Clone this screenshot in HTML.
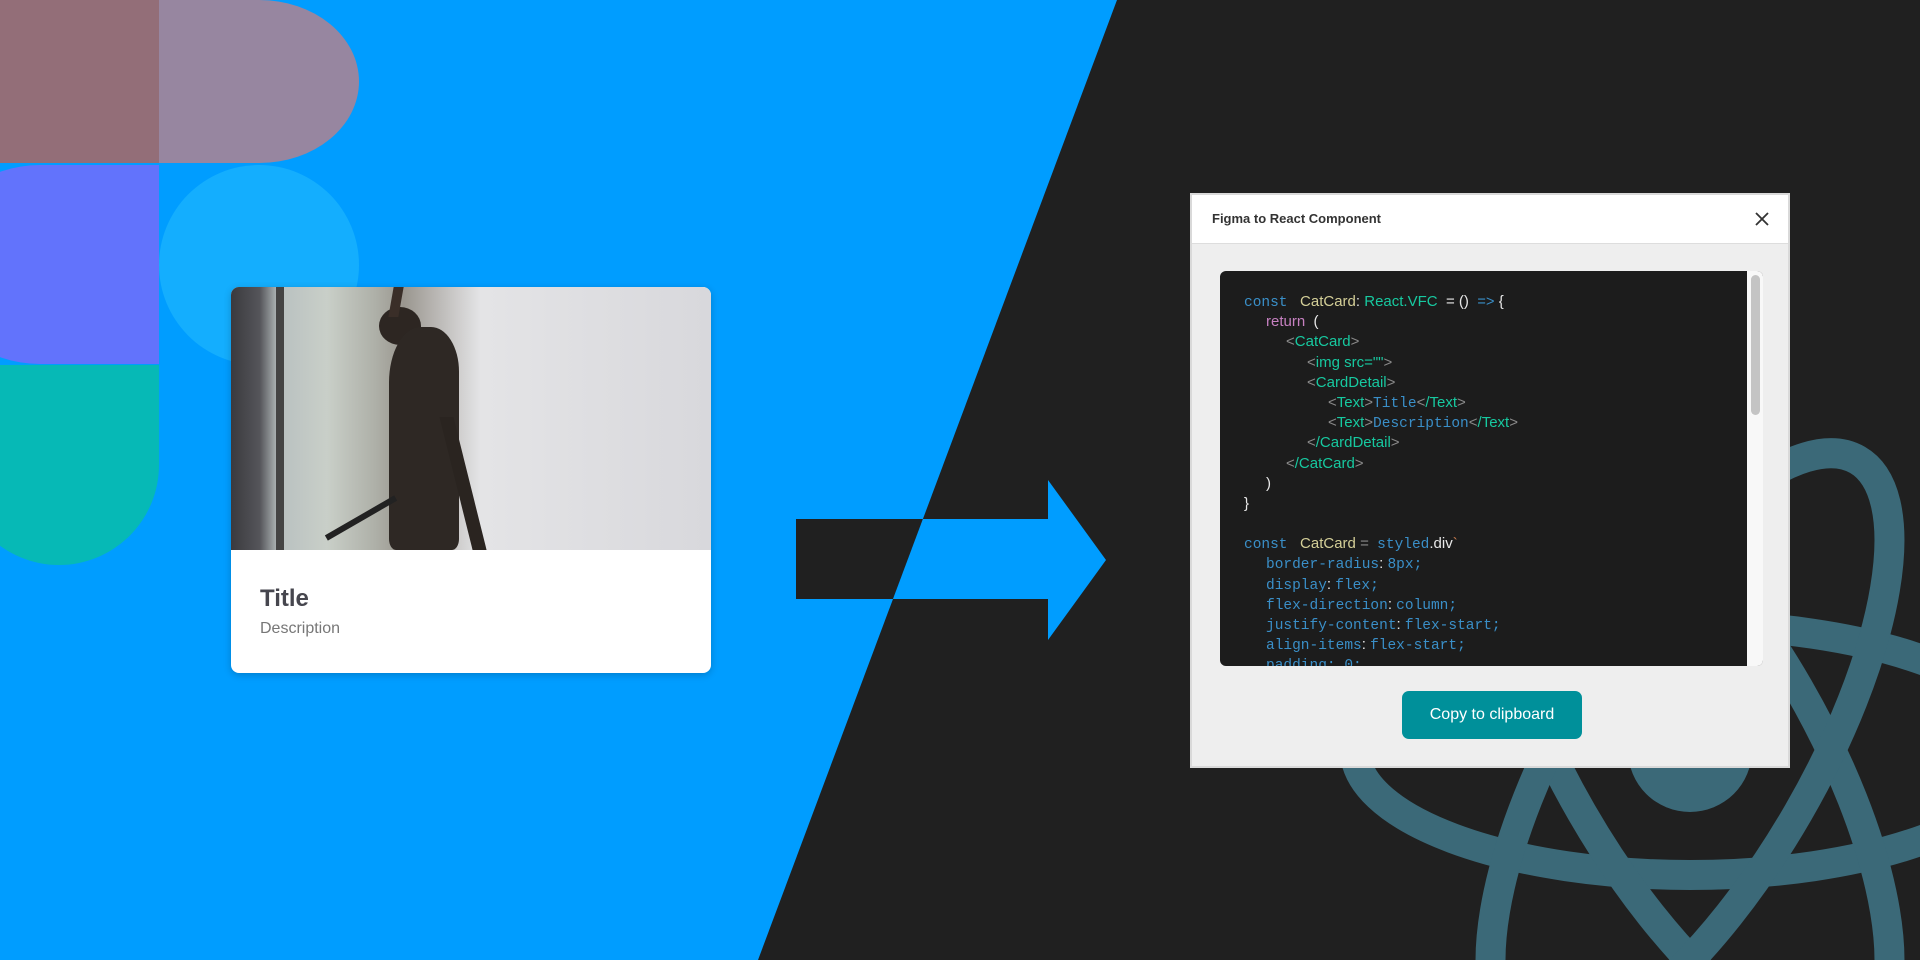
<!DOCTYPE html>
<html><head><style>
*{margin:0;padding:0;box-sizing:border-box}
body{width:1920px;height:960px;overflow:hidden;position:relative;background:#202020;font-family:"Liberation Sans",sans-serif}
.abs{position:absolute}
.code{position:absolute;left:24px;top:21px;font-size:15px;color:#ddd}
.code div{height:20.2px;line-height:20.2px;white-space:pre}
.m{font-family:"Liberation Mono",monospace;color:#3a8fc8;font-size:14.5px}
.y{color:#d4cf98}.g{color:#17c9a0}.p{color:#c680c0}.gr{color:#8a8a8a}.w{color:#e8e8e8}
</style></head><body>
<svg class="abs" style="left:0;top:0" width="1920" height="960">
<defs>
<clipPath id="blue"><polygon points="0,0 1117,0 758,960 0,960"/></clipPath>
<clipPath id="dark"><polygon points="1117,0 1920,0 1920,960 758,960"/></clipPath>
</defs>
<polygon points="0,0 1117,0 758,960 0,960" fill="#009dff"/>
<g fill="none" stroke="#3b6978" stroke-width="30" clip-path="url(#dark)">
<ellipse cx="1690" cy="750" rx="335" ry="125"/>
<ellipse cx="1690" cy="750" rx="335" ry="125" transform="rotate(60 1690 750)"/>
<ellipse cx="1690" cy="750" rx="335" ry="125" transform="rotate(120 1690 750)"/>
</g>
<circle cx="1690" cy="750" r="62" fill="#3b6978"/>
<polygon points="796,519 1048,519 1048,480 1106,560 1048,640 1048,599 796,599" fill="#202020" clip-path="url(#blue)"/>
<polygon points="796,519 1048,519 1048,480 1106,560 1048,640 1048,599 796,599" fill="#009dff" clip-path="url(#dark)"/>
</svg>
<div class="abs" style="left:0;top:0;width:159px;height:163px;background:#936e78"></div>
<div class="abs" style="left:159px;top:0;width:200px;height:163px;background:#9786a0;border-radius:0 100px 100px 0/0 82px 82px 0"></div>
<div class="abs" style="left:-60px;top:165px;width:219px;height:199px;background:#6273fc;border-radius:100px 0 0 100px/82px 0 0 82px"></div>
<div class="abs" style="left:159px;top:165px;width:200px;height:200px;background:#14aefe;border-radius:50%"></div>
<div class="abs" style="left:-41px;top:365px;width:200px;height:200px;background:#06b9b6;border-radius:0 0 100px 100px"></div>
<div class="abs" style="left:231px;top:287px;width:480px;height:386px;background:#fff;border-radius:8px;overflow:hidden;box-shadow:0 2px 8px rgba(0,0,0,.2)">
<div style="position:relative;height:263px;background:linear-gradient(90deg,#3a3a3e 0%,#55555a 6%,#b8c0c0 10%,#c9cfc8 20%,#aeb0a8 30%,#9a968f 36%,#e4e4e6 52%,#d8d8dc 100%)">
<div class="abs" style="left:45px;top:0;width:8px;height:263px;background:#444"></div>
<div class="abs" style="left:148px;top:20px;width:42px;height:38px;background:#2d2622;border-radius:50% 50% 40% 50%"></div>
<div class="abs" style="left:160px;top:0;width:10px;height:30px;background:#3a2e28;transform:skewX(-10deg)"></div>
<div class="abs" style="left:158px;top:40px;width:70px;height:223px;background:#2e2824;border-radius:45% 40% 10% 10%/25% 20% 5% 5%"></div>
<div class="abs" style="left:225px;top:130px;width:14px;height:133px;background:#2a2420;transform:skewX(14deg)"></div>
<div class="abs" style="left:90px;top:228px;width:80px;height:6px;background:#222;transform:rotate(-30deg)"></div>
</div>
<div class="abs" style="left:29px;top:298px;font-size:24px;font-weight:bold;color:#46464e">Title</div>
<div class="abs" style="left:29px;top:333px;font-size:16px;color:#777">Description</div>
</div>
<div class="abs" style="left:1190px;top:193px;width:600px;height:575px;background:#eeeeee;border:2px solid #d9d9d9">
<div style="height:49px;background:#fff;border-bottom:1px solid #ddd;position:relative">
<div class="abs" style="left:20px;top:16px;font-size:13px;font-weight:bold;color:#333">Figma to React Component</div>
<svg class="abs" style="right:18px;top:16px" width="16" height="16"><path d="M2,2 L14,14 M14,2 L2,14" stroke="#333" stroke-width="1.8"/></svg>
</div>
<div class="abs" style="left:28px;top:76px;width:543px;height:395px;background:#1c1c1c;border-radius:6px;overflow:hidden">
<div class="abs" style="right:0;top:0;width:16px;height:395px;background:#f8f8f8"></div>
<div class="abs" style="right:3px;top:4px;width:9px;height:140px;background:#c4c4c4;border-radius:5px"></div>
<div class="code"><div><span class="m">const</span>   <span class="y">CatCard</span>: <span class="g">React.VFC</span>  <span class="w">= ()</span>  <span class="m">=&gt;</span> <span class="w">{</span></div><div style="padding-left:22px"><span class="p">return</span>  <span class="w">(</span></div><div style="padding-left:42px"><span class="gr">&lt;</span><span class="g">CatCard</span><span class="gr">&gt;</span></div><div style="padding-left:63px"><span class="gr">&lt;</span><span class="g">img src=""</span><span class="gr">&gt;</span></div><div style="padding-left:63px"><span class="gr">&lt;</span><span class="g">CardDetail</span><span class="gr">&gt;</span></div><div style="padding-left:84px"><span class="gr">&lt;</span><span class="g">Text</span><span class="gr">&gt;</span><span class="m">Title</span><span class="gr">&lt;</span><span class="g">/Text</span><span class="gr">&gt;</span></div><div style="padding-left:84px"><span class="gr">&lt;</span><span class="g">Text</span><span class="gr">&gt;</span><span class="m">Description</span><span class="gr">&lt;</span><span class="g">/Text</span><span class="gr">&gt;</span></div><div style="padding-left:63px"><span class="gr">&lt;</span><span class="g">/CardDetail</span><span class="gr">&gt;</span></div><div style="padding-left:42px"><span class="gr">&lt;</span><span class="g">/CatCard</span><span class="gr">&gt;</span></div><div style="padding-left:22px"><span class="w">)</span></div><div><span class="w">}</span></div><div></div><div><span class="m">const</span>   <span class="y">CatCard</span> <span class="gr">=</span>  <span class="m">styled</span><span class="w">.div</span><span style="color:#d08050">`</span></div><div style="padding-left:22px"><span class="m">border-radius</span><span class="w">:</span> <span class="m">8px;</span></div><div style="padding-left:22px"><span class="m">display</span><span class="w">:</span> <span class="m">flex;</span></div><div style="padding-left:22px"><span class="m">flex-direction</span><span class="w">:</span> <span class="m">column;</span></div><div style="padding-left:22px"><span class="m">justify-content</span><span class="w">:</span> <span class="m">flex-start;</span></div><div style="padding-left:22px"><span class="m">align-items</span><span class="w">:</span> <span class="m">flex-start;</span></div><div style="padding-left:22px"><span class="m">padding: 0;</span></div></div>
</div>
<div class="abs" style="left:210px;top:496px;width:180px;height:48px;background:#00909a;border-radius:7px;color:#fff;font-size:16px;text-align:center;line-height:48px">Copy to clipboard</div>
</div>
</body></html>
